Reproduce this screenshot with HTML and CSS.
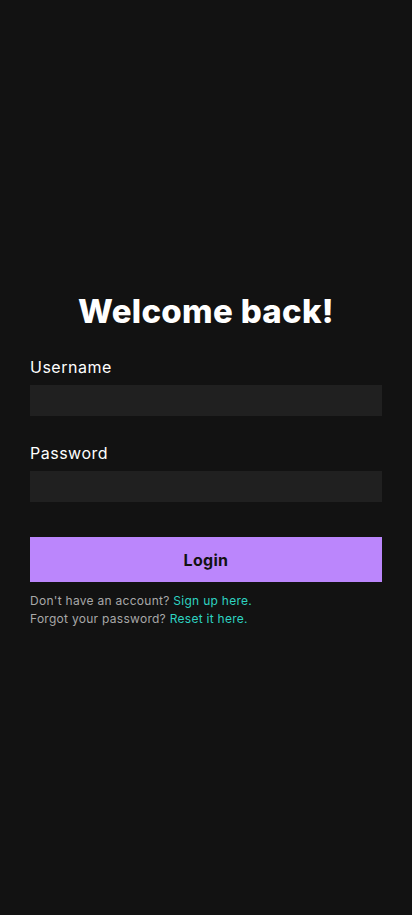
FILE: index.html
```html
<!DOCTYPE html>
<html lang="en">
<head>
<meta charset="utf-8">
<meta name="viewport" content="width=device-width, initial-scale=1">
<title>Login</title>
<link rel="stylesheet" href="styles.css">
</head>
<body>
<main class="page">
  <section class="card">
    <h1 class="title">Welcome back!</h1>
    <form class="form">
      <div class="field">
        <label class="label" for="username">Username</label>
        <input class="input" id="username" type="text">
      </div>
      <div class="field">
        <label class="label" for="password">Password</label>
        <input class="input" id="password" type="password">
      </div>
      <button class="button" type="button">Login</button>
    </form>
    <p class="hint">Don't have an account? <a class="link" href="#">Sign up here.</a></p>
    <p class="hint">Forgot your password? <a class="link" href="#">Reset it here.</a></p>
  </section>
</main>
</body>
</html>
```
FILE: styles.css
```css
* { box-sizing: border-box; }
html, body { margin: 0; padding: 0; }
body {
  background: #121212;
  color: #ffffff;
  font-family: Inter, "Open Sans", sans-serif;
}
.page {
  min-height: 100vh;
  display: flex;
  align-items: center;
  justify-content: center;
  padding: 0 30px;
}
.card {
  width: 352px;
  display: flex;
  flex-direction: column;
}
.title {
  margin: 0 0 20px;
  text-align: center;
  font-size: 33px;
  line-height: 48px;
  font-weight: 800;
  letter-spacing: 0.3px;
}
.form {
  display: flex;
  flex-direction: column;
}
.field {
  display: flex;
  flex-direction: column;
  margin-bottom: 25px;
}
.field + .field { margin-bottom: 35px; }
.label {
  font-size: 16px;
  line-height: 24px;
  font-weight: 400;
  letter-spacing: 0.5px;
  margin-bottom: 6px;
}
.input {
  height: 31px;
  border: 0;
  background: #202020;
  color: #fff;
  outline: none;
}
.button {
  height: 45px;
  border: 0;
  background: #bb86fc;
  color: #121212;
  font-family: inherit;
  font-size: 16px;
  font-weight: 700;
  letter-spacing: 0.3px;
  margin-bottom: 10px;
}
.hint {
  margin: 0;
  font-size: 12px;
  line-height: 18px;
  color: #a8a8a8;
  letter-spacing: 0.28px;
}
.link {
  color: #2ed3c1;
  text-decoration: none;
}
```
